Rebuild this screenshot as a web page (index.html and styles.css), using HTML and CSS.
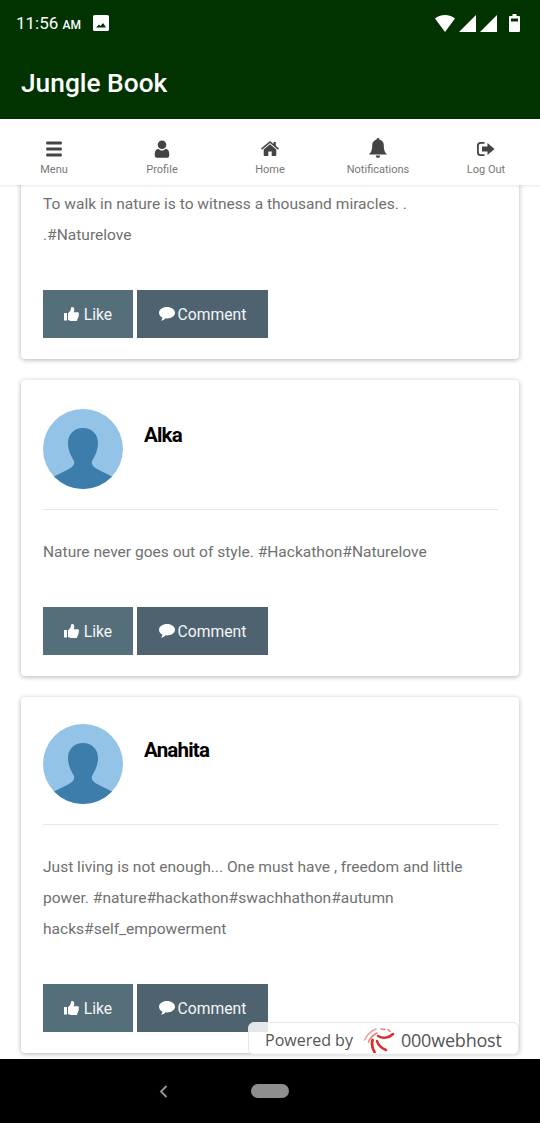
FILE: index.html
```html
<!DOCTYPE html>
<html lang="en">
<head>
  <meta charset="UTF-8">
  <title>Jungle Book</title>
  <link rel="stylesheet" href="styles.css">
</head>
<body>
  <div class="phone">
    <header class="topbar">
      <div class="status">
        <span class="clock">11:56 <small>AM</small></span>
        <svg class="status-pic" viewBox="0 0 16 16"><path fill="#fff" fill-rule="evenodd" d="M1.500 0h13A1.500 1.500 0 0 1 16 1.500v13a1.500 1.500 0 0 1-1.500 1.500h-13A1.500 1.500 0 0 1 0 14.500v-13A1.500 1.500 0 0 1 1.500 0zM3 12.500h10L10 8 7.500 11 6 9.500z"/></svg>
        <span class="status-right">
          <svg width="20" height="17" viewBox="0 0 20 17"><path fill="#fff" d="M0 3.500C2.500 1.300 6 0 10 0s7.500 1.300 10 3.500L10 17z"/></svg>
          <svg width="17" height="17" viewBox="0 0 17 17"><path fill="#fff" d="M17 0v17H0z"/></svg>
          <svg width="17" height="17" viewBox="0 0 17 17"><path fill="#fff" d="M17 0v17H0z"/></svg>
          <svg class="battery" width="11" height="18" viewBox="0 0 11 18"><path fill="#fff" fill-rule="evenodd" d="M3.500 0h4v2H10a1 1 0 0 1 1 1v14a1 1 0 0 1-1 1H1a1 1 0 0 1-1-1V3a1 1 0 0 1 1-1h2.500zM2 4.500v3h7v-3z"/></svg>
        </span>
      </div>
      <h1>Jungle Book</h1>
    </header>

    <nav class="tabs">
      <a class="tab">
        <svg class="tab-icon" viewBox="0 0 18 18"><path fill="#444" d="M2 1.500h14a.8.8 0 0 1 .8.8v1.400a.8.8 0 0 1-.8.8H2a.8.8 0 0 1-.8-.8V2.300a.8.8 0 0 1 .8-.8zm0 6h14a.8.8 0 0 1 .8.8v1.400a.8.8 0 0 1-.8.8H2a.8.8 0 0 1-.8-.8V8.300a.8.8 0 0 1 .8-.8zm0 6h14a.8.8 0 0 1 .8.8v1.400a.8.8 0 0 1-.8.8H2a.8.8 0 0 1-.8-.8v-1.400a.8.8 0 0 1 .8-.8z"/></svg>
        Menu
      </a>
      <a class="tab">
        <svg class="tab-icon" viewBox="0 0 18 18"><circle cx="9" cy="4.700" r="4.300" fill="#444"/><path fill="#444" d="M5.300 8.700C6.300 9.900 7.600 10.500 9 10.500s2.700-.6 3.700-1.800c2 .5 3.500 2.200 3.500 4.800v2.300a2 2 0 0 1-2 2H3.800a2 2 0 0 1-2-2v-2.300c0-2.600 1.500-4.300 3.500-4.800z"/></svg>
        Profile
      </a>
      <a class="tab">
        <svg class="tab-icon" viewBox="0 0 18 16"><path fill="#444" d="M9 3.200l6.300 5.200V14a1 1 0 0 1-1 1h-3.600v-4.500H7.300V15H3.700a1 1 0 0 1-1-1V8.400z"/><path fill="#444" d="M9 0l3.500 2.900V1h2.300v3.800L18 7.500l-1 1.200L9 2.100 1 8.700 0 7.500z"/></svg>
        Home
      </a>
      <a class="tab">
        <svg class="tab-icon tab-icon-tall" viewBox="0 0 18 20"><path fill="#444" d="M9 0a1.300 1.300 0 0 1 1.300 1.500C13 2 14.800 4.200 14.800 7c0 5 .9 7 3.200 9.500H0C2.300 14 3.200 12 3.200 7c0-2.800 1.800-5 4.500-5.500A1.300 1.300 0 0 1 9 0zM6.800 17.500h4.400A2.300 2.300 0 0 1 9 20a2.300 2.300 0 0 1-2.200-2.500z"/></svg>
        Notifications
      </a>
      <a class="tab">
        <svg class="tab-icon" viewBox="0 0 18 18"><path fill="#444" d="M3.500 2h4v1.800H3.700A1.900 1.900 0 0 0 1.800 5.700v6.600a1.900 1.900 0 0 0 1.900 1.900H7.500V16h-4A3.500 3.500 0 0 1 0 12.500v-7A3.500 3.500 0 0 1 3.500 2z"/><path fill="#444" d="M10.500 3L17.500 9l-7 6v-3.500H5v-5h5.500z"/></svg>
        Log Out
      </a>
    </nav>

    <main class="feed">
      <article class="card card-cut">
        <p class="post-text">To walk in nature is to witness a thousand miracles. .<br>.#Naturelove</p>
        <div class="actions">
          <button class="btn btn-like"><svg class="btn-icon" viewBox="0 0 15 14"><use href="#thumb"/></svg>Like</button>
          <button class="btn btn-comment"><svg class="btn-icon btn-icon-wide" viewBox="0 0 16 14"><use href="#bubble"/></svg>Comment</button>
        </div>
      </article>

      <article class="card">
        <div class="author">
          <svg class="avatar" viewBox="0 0 80 80"><use href="#person"/></svg>
          <h2>Alka</h2>
        </div>
        <p class="post-text">Nature never goes out of style. #Hackathon#Naturelove</p>
        <div class="actions">
          <button class="btn btn-like"><svg class="btn-icon" viewBox="0 0 15 14"><use href="#thumb"/></svg>Like</button>
          <button class="btn btn-comment"><svg class="btn-icon btn-icon-wide" viewBox="0 0 16 14"><use href="#bubble"/></svg>Comment</button>
        </div>
      </article>

      <article class="card card-last">
        <div class="author">
          <svg class="avatar" viewBox="0 0 80 80"><use href="#person"/></svg>
          <h2>Anahita</h2>
        </div>
        <p class="post-text">Just living is not enough... One must have , freedom and little power. #nature#hackathon#swachhathon#autumn hacks#self_empowerment</p>
        <div class="actions">
          <button class="btn btn-like"><svg class="btn-icon" viewBox="0 0 15 14"><use href="#thumb"/></svg>Like</button>
          <button class="btn btn-comment"><svg class="btn-icon btn-icon-wide" viewBox="0 0 16 14"><use href="#bubble"/></svg>Comment</button>
        </div>
      </article>

      <div class="powered">
        <span class="powered-by">Powered by</span>
        <svg class="powered-logo" viewBox="0 0 32 26" fill="none" stroke-linecap="round">
          <path stroke="#e9a09c" stroke-width="1.500" d="M13 2C8 4 4 8 1.500 13"/>
          <path stroke="#e8817c" stroke-width="1.500" d="M14 6C10 8 7 11 5.500 15"/>
          <path stroke="#d9302a" stroke-width="2.800" d="M9.500 13c-1 4-.5 8 2 12"/>
          <path stroke="#d9302a" stroke-width="2.500" d="M14 14c1 4 4 7 9 9"/>
          <path stroke="#d9302a" stroke-width="2.500" d="M15 9c5 3 11 2 15-2"/>
          <path stroke="#e8817c" stroke-width="1.600" d="M18 2l4 .5M25 2.500l2 2"/>
        </svg>
        <span class="powered-name">000webhost</span>
      </div>
    </main>

    <footer class="softkeys">
      <svg class="back" width="9" height="13" viewBox="0 0 9 13"><path fill="none" stroke="#9a9a9a" stroke-width="1.800" d="M7.500 1L2 6.500 7.500 12"/></svg>
      <span class="pill"></span>
    </footer>
  </div>

  <svg class="defs" width="0" height="0">
    <defs>
      <path id="thumb" fill="#fff" d="M0 6h3v7.500H0zM4 6.200c1.500-1 2.800-3 3-5C7.100.3 7.700 0 8.300 0c1.300 0 2 1.300 2 2.700 0 .8-.3 1.800-.7 2.600h3.900c.9 0 1.500.7 1.500 1.500 0 .5-.2.900-.5 1.200.2.300.3.600.3 1 0 .6-.3 1.100-.8 1.400.1.200.1.400.1.600 0 .6-.4 1.100-.9 1.300.1.200.1.400.1.500 0 .9-.7 1.700-1.700 1.700H8.500C6.800 14 5.500 13.500 4 13z"/>
      <path id="bubble" fill="#fff" d="M8 0c4.400 0 8 2.500 8 5.700s-3.600 5.700-8 5.700l-1.500-.1C5.300 12.700 3.500 13.700 2 14c.8-1 1.300-2.200 1.300-3.500C1.300 9.500 0 7.700 0 5.700 0 2.500 3.600 0 8 0z"/>
      <g id="person">
        <circle cx="40" cy="40" r="40" fill="#93c4e8"/>
        <path fill="#3d7dab" d="M40 19c8.500 0 15 6 15 15 0 7-3 13-6 18-1 3 1 6 5 8l15 7.500A40 40 0 0 1 11 67.500l15-7.500c4-2 6-5 5-8-3-5-6-11-6-18 0-9 6.500-15 15-15z"/>
      </g>
    </defs>
  </svg>
</body>
</html>
```

FILE: styles.css
```css
* {
  box-sizing: border-box;
}

body {
  margin: 0;
  font-family: Roboto, "Liberation Sans", sans-serif;
  background: #fff;
}

.phone {
  display: flex;
  flex-direction: column;
  width: 540px;
  height: 1123px;
  overflow: hidden;
}

.topbar {
  flex: 0 0 119px;
  padding: 13px 20px 0 16px;
  background: #003300;
  color: #fff;
}

.status {
  display: flex;
  align-items: center;
  height: 20px;
}

.clock {
  font-size: 17px;
}

.clock small {
  font-size: 12px;
  font-weight: 500;
}

.status-pic {
  width: 16px;
  height: 16px;
  margin-left: 12px;
}

.status-right {
  display: flex;
  align-items: center;
  gap: 4px;
  margin-left: auto;
}

.battery {
  margin-left: 8px;
}

.topbar h1 {
  margin: 33px 0 0 5px;
  font-size: 26.300px;
  line-height: 34px;
  font-weight: 500;
}

.tabs {
  position: relative;
  z-index: 2;
  display: flex;
  flex: 0 0 66px;
  padding: 21px 0 0;
  background: #fff;
  box-shadow: 0 1px 3px rgba(0, 0, 0, 0.1);
}

.tab {
  display: flex;
  flex: 1;
  flex-direction: column;
  align-items: center;
  font-size: 11px;
  color: #777;
}

.tab-icon {
  width: 18px;
  height: 18px;
  margin-bottom: 5px;
}

.tab-icon-tall {
  height: 20px;
  margin-top: -2px;
}

.feed {
  position: relative;
  flex: 1;
  padding: 0 21px;
  overflow: hidden;
  background: #fff;
}

.card {
  margin-bottom: 21px;
  padding: 29px 21px 21px 22px;
  background: #fff;
  border-radius: 4px;
  box-shadow: 0 1px 5px rgba(0, 0, 0, 0.3);
}

.card-cut {
  margin-top: -10px;
  padding-top: 0;
}

.card-last {
  padding-top: 27px;
}

.author {
  display: flex;
  gap: 21px;
  padding-bottom: 20px;
  border-bottom: 1px solid #e8e8e8;
}

.avatar {
  width: 80px;
  height: 80px;
}

.author h2 {
  margin: 13px 0 0;
  font-size: 20.500px;
  line-height: 26px;
  font-weight: 700;
  letter-spacing: -0.8px;
  color: #000;
}

.post-text {
  margin: 0;
  font-size: 15.550px;
  line-height: 31px;
  color: #707070;
}

.author + .post-text {
  margin-top: 27px;
}

.actions {
  display: flex;
  gap: 4px;
  margin-top: 39px;
}

.card-cut .post-text {
  padding-top: 14px;
}

.btn {
  display: flex;
  align-items: center;
  justify-content: center;
  height: 48px;
  padding: 0;
  border: 0;
  font-family: inherit;
  font-size: 15.700px;
  color: #f4f6f7;
}

.btn-like {
  width: 90px;
  background: #546e7a;
}

.btn-comment {
  width: 131px;
  background: #4e636f;
}

.btn-icon {
  width: 15px;
  height: 14px;
  margin-right: 5px;
}

.btn-icon-wide {
  width: 16px;
  margin-right: 3px;
}

.powered {
  position: absolute;
  right: 21px;
  bottom: 4px;
  display: flex;
  align-items: center;
  width: 271px;
  height: 33px;
  padding: 3px 15px 0 16px;
  background: rgba(255, 255, 255, 0.85);
  border: 1px solid #e6e6e6;
  border-radius: 6px;
  color: #555;
  white-space: nowrap;
}

.powered-by {
  font-family: "Open Sans", sans-serif;
  font-size: 16px;
}

.powered-logo {
  width: 32px;
  height: 26px;
  margin-left: 10px;
}

.powered-name {
  margin-left: 6px;
  font-family: "Open Sans", sans-serif;
  font-size: 18px;
  font-weight: 500;
  letter-spacing: -0.2px;
}

.softkeys {
  position: relative;
  display: flex;
  flex: 0 0 64px;
  align-items: center;
  background: #000;
  padding-left: 159px;
}

.back {
  margin-right: 83px;
}

.pill {
  width: 38px;
  height: 14px;
  border-radius: 7px;
  background: #8e8e8e;
}

.defs {
  position: absolute;
}
```
